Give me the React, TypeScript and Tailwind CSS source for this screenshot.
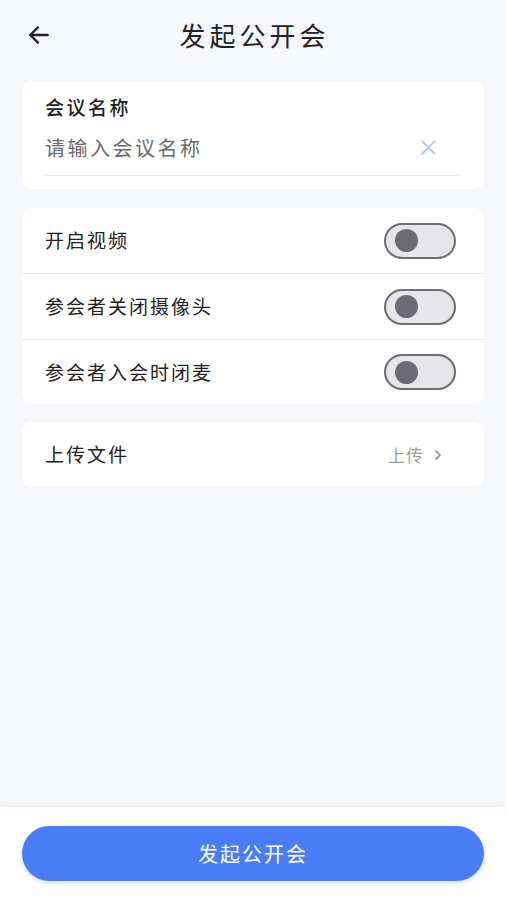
const font = { fontFamily: '"Noto Sans CJK SC", "Noto Sans", sans-serif' };

function Toggle() {
  return (
    <div className="flex h-[36px] w-[72px] items-center rounded-full border-[2.5px] border-[#6d6d72] bg-[#e6e6ea] pl-[9px]">
      <div className="h-[23px] w-[23px] rounded-full bg-[#6b6b71]" />
    </div>
  );
}

function SwitchRow({ label, last }: { label: string; last?: boolean }) {
  return (
    <div className={`flex items-center justify-between pl-[23px] pr-[28px] ${last ? 'h-[64px]' : 'h-[65px]'}`}>
      <span className="text-[19px] tracking-[2px] text-[#222]">{label}</span>
      <Toggle />
    </div>
  );
}

export default function App() {
  return (
    <div className="flex min-h-screen flex-col bg-[#f6f7fb]" style={font}>
      {/* header */}
      <div className="grid h-[70px] grid-cols-[1fr_auto_1fr] items-center px-[26px]">
        <svg width="26" height="26" viewBox="0 0 24 24" fill="none" stroke="#222" strokeWidth="2.2" strokeLinecap="round" strokeLinejoin="round">
          <path d="M20 12H4" />
          <path d="M11 5l-7 7 7 7" />
        </svg>
        <h1 className="pl-[3px] text-[26px] leading-[34px] tracking-[4px] text-[#222]">发起公开会</h1>
        <div />
      </div>

      <div className="flex flex-col gap-[19px] px-[22px] pt-[11px]">
        {/* meeting name */}
        <div className="rounded-[10px] bg-white px-[23px] pb-[13px] pt-[13px]">
          <div className="h-[26px] text-[19px] font-medium leading-[26px] tracking-[2.5px] text-[#222]">会议名称</div>
          <div className="flex h-[56px] items-center justify-between border-b border-[#ececef] pr-[24px]">
            <span className="text-[20px] tracking-[2.5px] text-[#6a6a6e]">请输入会议名称</span>
            <svg width="17" height="17" viewBox="0 0 16 16" fill="none" stroke="#b6c4d3" strokeWidth="1.6" strokeLinecap="round">
              <path d="M2 2l12 12M14 2L2 14" />
            </svg>
          </div>
        </div>

        {/* switches */}
        <div className="overflow-hidden rounded-[10px] bg-white">
          <SwitchRow label="开启视频" />
          <div className="h-px bg-[#e8e8ec]" />
          <SwitchRow label="参会者关闭摄像头" />
          <div className="h-px bg-[#e8e8ec]" />
          <SwitchRow label="参会者入会时闭麦" last />
        </div>

        {/* upload */}
        <div className="-mt-px flex h-[65px] items-center justify-between rounded-[10px] bg-white pl-[23px] pr-[42px]">
          <span className="text-[19px] tracking-[2px] text-[#222]">上传文件</span>
          <div className="flex items-center gap-[10px] text-[#9d9d9f]">
            <span className="text-[17px] tracking-[1px]">上传</span>
            <svg width="8" height="12" viewBox="0 0 8 12" fill="none" stroke="#9d9d9f" strokeWidth="1.8" strokeLinecap="round" strokeLinejoin="round">
              <path d="M2 2l4 4-4 4" />
            </svg>
          </div>
        </div>
      </div>

      <div className="flex-1" />

      {/* bottom bar */}
      <div className="h-[93px] bg-white px-[22px] pt-[19px] shadow-[0_-2px_6px_rgba(0,0,0,0.04)]">
        <button className="h-[55px] w-full rounded-full bg-[#4a7cf8] text-[20px] tracking-[2px] text-white shadow-[0_2px_4px_rgba(74,124,248,0.25)]">
          发起公开会
        </button>
      </div>
    </div>
  );
}
